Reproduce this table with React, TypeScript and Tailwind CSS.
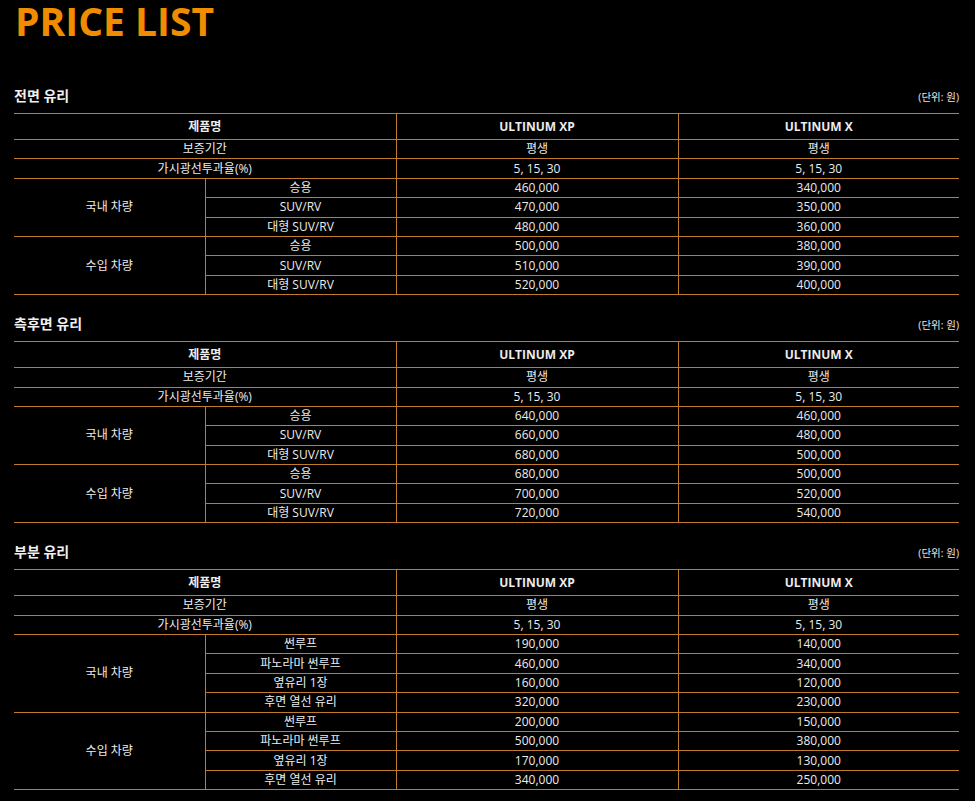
import React from 'react'

type Row = [string, string, string]

interface Section {
   title: string
   domestic: Row[]
   imported: Row[]
}

const sections: Section[] = [
   {
      title: '전면 유리',
      domestic: [
         ['승용', '460,000', '340,000'],
         ['SUV/RV', '470,000', '350,000'],
         ['대형 SUV/RV', '480,000', '360,000'],
      ],
      imported: [
         ['승용', '500,000', '380,000'],
         ['SUV/RV', '510,000', '390,000'],
         ['대형 SUV/RV', '520,000', '400,000'],
      ],
   },
   {
      title: '측후면 유리',
      domestic: [
         ['승용', '640,000', '460,000'],
         ['SUV/RV', '660,000', '480,000'],
         ['대형 SUV/RV', '680,000', '500,000'],
      ],
      imported: [
         ['승용', '680,000', '500,000'],
         ['SUV/RV', '700,000', '520,000'],
         ['대형 SUV/RV', '720,000', '540,000'],
      ],
   },
   {
      title: '부분 유리',
      domestic: [
         ['썬루프', '190,000', '140,000'],
         ['파노라마 썬루프', '460,000', '340,000'],
         ['옆유리 1장', '160,000', '120,000'],
         ['후면 열선 유리', '320,000', '230,000'],
      ],
      imported: [
         ['썬루프', '200,000', '150,000'],
         ['파노라마 썬루프', '500,000', '380,000'],
         ['옆유리 1장', '170,000', '130,000'],
         ['후면 열선 유리', '340,000', '250,000'],
      ],
   },
]

const cell = 'border-b border-[#c27b2a] text-center align-middle p-0'
const cellL = 'border-b border-l border-[#c27b2a] text-center align-middle p-0'

const GroupRows = ({ label, rows }: { label: string; rows: Row[] }) => (
   <>
      {rows.map((r, i) => (
         <tr key={i} className="h-[19.4px]">
            {i === 0 && (
               <td rowSpan={rows.length} className={cell}>
                  {label}
               </td>
            )}
            <td className={cellL}>{r[0]}</td>
            <td className={cellL}>{r[1]}</td>
            <td className={cellL}>{r[2]}</td>
         </tr>
      ))}
   </>
)

const PriceTable = ({ section, first }: { section: Section; first?: boolean }) => (
   <div className={first ? 'mt-[45px]' : 'mt-[19px]'}>
      <div className="flex items-center justify-between h-[20px] mb-[7px]">
         <h2 className="text-[14px] font-bold text-[#f0f0f0] leading-none">{section.title}</h2>
         <span className="text-[10.5px] text-[#e6e6e6] leading-none pt-[2px]">(단위: 원)</span>
      </div>
      <table className="w-full table-fixed border-collapse border-t border-[#c27b2a] text-[12px] leading-none text-[#ececec]">
         <colgroup>
            <col className="w-[191px]" />
            <col className="w-[191px]" />
            <col className="w-[282px]" />
            <col />
         </colgroup>
         <tbody>
            <tr className="h-[26px] font-bold">
               <td colSpan={2} className={cell}>
                  제품명
               </td>
               <td className={cellL}>ULTINUM XP</td>
               <td className={cellL}>ULTINUM X</td>
            </tr>
            <tr className="h-[19.4px]">
               <td colSpan={2} className={cell}>
                  보증기간
               </td>
               <td className={cellL}>평생</td>
               <td className={cellL}>평생</td>
            </tr>
            <tr className="h-[19.4px]">
               <td colSpan={2} className={cell}>
                  가시광선투과율(%)
               </td>
               <td className={cellL}>5, 15, 30</td>
               <td className={cellL}>5, 15, 30</td>
            </tr>
            <GroupRows label="국내 차량" rows={section.domestic} />
            <GroupRows label="수입 차량" rows={section.imported} />
         </tbody>
      </table>
   </div>
)

export default function App() {
   return (
      <div className="min-h-screen bg-black font-['Open_Sans','Noto_Sans_CJK_KR',sans-serif]">
         <div className="w-[945px] ml-[14px] pt-[1px] pb-[12px]">
            <h1 className="text-[39px] font-bold leading-[40px] text-[#f08c00] pl-[1px]">PRICE LIST</h1>
            {sections.map((s, i) => (
               <PriceTable key={i} section={s} first={i === 0} />
            ))}
         </div>
      </div>
   )
}
